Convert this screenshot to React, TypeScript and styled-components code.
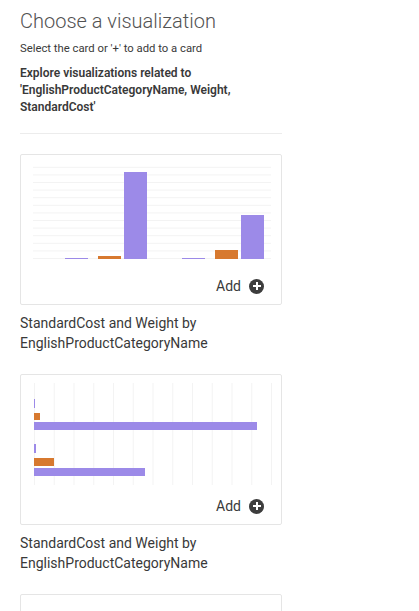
import styled, { createGlobalStyle } from "styled-components";

const GlobalStyle = createGlobalStyle`
  html, body {
    margin: 0;
    padding: 0;
    background: #ffffff;
  }
  body {
    font-family: Roboto, "Liberation Sans", sans-serif;
    color: #393939;
  }
`;

const Panel = styled.div`
  width: 282px;
  padding: 8px 0 0 20px;
  height: 611px;
  overflow: hidden;
  box-sizing: border-box;
`;
const Title = styled.h1`
  margin: 0;
  font-size: 20px;
  line-height: 26px;
  font-weight: 300;
  color: #525252;
`;
const Hint = styled.p`
  margin: 8px 0 0;
  font-size: 11.3px;
  line-height: 14px;
`;
const Related = styled.p`
  margin: 9px 0 0;
  font-size: 12px;
  line-height: 17px;
  font-weight: 600;
`;
const Divider = styled.hr`
  margin: 17px 0 20px;
  border: none;
  border-top: 1px solid #ececec;
`;
const Suggestion = styled.div`
  margin-bottom: 21px;
`;
const Card = styled.div`
  border: 1px solid #e5e5e5;
  border-radius: 2px;
  height: 151px;
  box-sizing: border-box;
  display: flex;
  flex-direction: column;
  cursor: pointer;
`;
const Chart = styled.svg`
  display: block;
  flex: none;
`;
const AddRow = styled.div`
  display: flex;
  justify-content: flex-end;
  align-items: center;
  gap: 8px;
  margin-top: auto;
  padding: 0 17px 10px 0;
  font-size: 14px;
  color: #393939;
`;
const PlusIcon = styled.span`
  width: 15px;
  height: 15px;
  border-radius: 50%;
  background: #3d3d3d;
  position: relative;
  &::before,
  &::after {
    content: "";
    position: absolute;
    background: #fff;
    left: 50%;
    top: 50%;
    transform: translate(-50%, -50%);
  }
  &::before {
    width: 8px;
    height: 2px;
  }
  &::after {
    width: 2px;
    height: 8px;
  }
`;
const Caption = styled.div`
  margin-top: 8px;
  font-size: 14px;
  line-height: 20px;
`;

const PURPLE = "#9c8ae8";
const ORANGE = "#d7792f";

function ColumnChart() {
  const lines = Array.from({ length: 13 }, (_, i) => 103.5 - i * 7.6);
  const bars = [
    { x: 44, h: 1, c: PURPLE },
    { x: 77, h: 3, c: ORANGE },
    { x: 103, h: 87, c: PURPLE },
    { x: 161, h: 1, c: PURPLE },
    { x: 194, h: 9, c: ORANGE },
    { x: 220, h: 44, c: PURPLE },
  ];
  return (
    <Chart viewBox="0 0 260 114" width="260" height="114">
      {lines.map((y) => (
        <line key={y} x1="12" x2="250" y1={y} y2={y} stroke="#f3f3f3" strokeWidth="1" />
      ))}
      {bars.map((b) => (
        <rect key={b.x} x={b.x} y={104 - b.h} width="23" height={b.h} fill={b.c} />
      ))}
    </Chart>
  );
}

function BarChart() {
  const lines = Array.from({ length: 13 }, (_, i) => 13.5 + i * 19.75);
  const bars = [
    { y: 24, h: 9, w: 1, c: PURPLE },
    { y: 38, h: 7, w: 6, c: ORANGE },
    { y: 47, h: 8, w: 223, c: PURPLE },
    { y: 69, h: 9, w: 2, c: PURPLE },
    { y: 83, h: 8, w: 20, c: ORANGE },
    { y: 93, h: 8, w: 111, c: PURPLE },
  ];
  return (
    <Chart viewBox="0 0 260 114" width="260" height="114">
      {lines.map((x) => (
        <line key={x} x1={x} x2={x} y1="8" y2="110" stroke="#f3f3f3" strokeWidth="1" />
      ))}
      {bars.map((b) => (
        <rect key={b.y} x="13" y={b.y} width={b.w} height={b.h} fill={b.c} />
      ))}
    </Chart>
  );
}

const suggestions = [
  { id: "column", chart: <ColumnChart /> },
  { id: "bar", chart: <BarChart /> },
  { id: "next", chart: null },
];

export default function App() {
  return (
    <>
      <GlobalStyle />
      <Panel>
        <Title>Choose a visualization</Title>
        <Hint>Select the card or '+' to add to a card</Hint>
        <Related>
          Explore visualizations related to 'EnglishProductCategoryName, Weight, StandardCost'
        </Related>
        <Divider />
        {suggestions.map((s) => (
          <Suggestion key={s.id}>
            <Card>
              {s.chart}
              {s.chart && (
                <AddRow>
                  Add <PlusIcon />
                </AddRow>
              )}
            </Card>
            {s.chart && <Caption>StandardCost and Weight by EnglishProductCategoryName</Caption>}
          </Suggestion>
        ))}
      </Panel>
    </>
  );
}
